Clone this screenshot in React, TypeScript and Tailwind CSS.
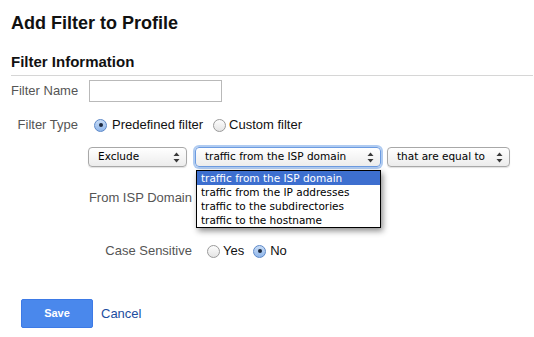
import React from "react";

function Arrows() {
  return (
    <svg width="7" height="11" viewBox="0 0 7 11" className="shrink-0">
      <path d="M3.5 0.5 L6.5 4 L0.5 4 Z" fill="#3a3a3a" />
      <path d="M3.5 10.5 L6.5 7 L0.5 7 Z" fill="#3a3a3a" />
    </svg>
  );
}

function Select({ label, width, focused }: { label: string; width: string; focused?: boolean }) {
  return (
    <div
      className={`${width} h-[20px] flex items-center justify-between pl-[9px] pr-[6px] rounded-[4px] border bg-gradient-to-b from-white to-[#ececec] text-[10.5px] text-black font-['DejaVu_Sans',sans-serif] ${
        focused
          ? "border-[#6c9be0] shadow-[0_0_0_2px_rgba(110,160,230,0.55)]"
          : "border-[#a8a8a8] shadow-[0_1px_1px_rgba(0,0,0,0.12)]"
      }`}
    >
      <span className="whitespace-nowrap">{label}</span>
      <Arrows />
    </div>
  );
}

function Radio({ checked }: { checked?: boolean }) {
  return (
    <span
      className={`ml-[5px] inline-flex h-[13px] w-[13px] shrink-0 items-center justify-center rounded-full border ${
        checked
          ? "border-[#5c88c8] bg-gradient-to-b from-[#c9dcf5] to-[#8fb6ea]"
          : "border-[#9a9a9a] bg-gradient-to-b from-[#fdfdfd] to-[#e4e4e4]"
      }`}
    >
      {checked && <span className="h-[4px] w-[4px] rounded-full bg-[#1c2a40]" />}
    </span>
  );
}

const options = [
  "traffic from the ISP domain",
  "traffic from the IP addresses",
  "traffic to the subdirectories",
  "traffic to the hostname",
];

export default function App() {
  return (
    <div className="min-h-[337px] w-[534px] bg-white pl-[11px] pr-[1px] font-['Liberation_Sans',Arial,sans-serif]">
      <h1 className="pt-[12px] text-[18px] leading-[22px] font-bold text-[#111]">Add Filter to Profile</h1>

      <h2 className="mt-[19px] pb-[4px] text-[15px] leading-[18px] font-bold text-[#111] border-b border-[#d6d6d6]">
        Filter Information
      </h2>

      {/* Filter name */}
      <div className="mt-[4px] flex items-center">
        <span className="w-[68px] shrink-0 whitespace-nowrap text-right pr-[1px] text-[13px] text-[#555]">Filter Name</span>
        <div className="ml-[10px] h-[22px] w-[133px] border border-[#b9b9b9] bg-white" />
      </div>

      {/* Filter type */}
      <div className="mt-[13px] flex h-[20px] items-center">
        <span className="w-[68px] shrink-0 whitespace-nowrap text-right pr-[1px] text-[13px] text-[#555]">Filter Type</span>
        <div className="ml-[10px] flex items-center whitespace-nowrap text-[13px] text-[#111]">
          <Radio checked />
          <span className="ml-[5px]">Predefined filter</span>
          <span className="ml-[5px] flex items-center">
            <Radio />
          </span>
          <span className="ml-[3px]">Custom filter</span>
        </div>
      </div>

      {/* Selects */}
      <div className="mt-[12px] ml-[77px] flex items-center">
        <Select label="Exclude" width="w-[99px]" />
        <div className="relative ml-[8px]">
          <Select label="traffic from the ISP domain" width="w-[186px]" focused />
          <ul className="absolute left-[1px] top-[23px] z-10 w-[185px] border border-black bg-white text-[10.5px] leading-[14px] text-black font-['DejaVu_Sans',sans-serif] shadow-[2px_3px_6px_rgba(0,0,0,0.45)]">
            {options.map((o, i) => (
              <li key={o} className={`pl-[4px] whitespace-nowrap ${i === 0 ? "bg-[#3d6fcf] text-white" : ""}`}>
                {o}
              </li>
            ))}
          </ul>
        </div>
        <div className="ml-[6px]">
          <Select label="that are equal to" width="w-[123px]" />
        </div>
      </div>

      {/* Nested fields */}
      <div className="ml-[77px]">
        <div className="mt-[20px] flex h-[22px] items-center">
          <span className="w-[104px] shrink-0 whitespace-nowrap text-right text-[13px] text-[#555]">From ISP Domain</span>
        </div>
        <div className="mt-[32px] flex h-[20px] items-center">
          <span className="w-[104px] shrink-0 whitespace-nowrap text-right text-[13px] text-[#555]">Case Sensitive</span>
          <div className="ml-[10px] flex items-center text-[13px] text-[#111]">
            <Radio />
            <span className="ml-[3px]">Yes</span>
            <span className="ml-[4px] flex items-center">
              <Radio checked />
            </span>
            <span className="ml-[4px]">No</span>
          </div>
        </div>
      </div>

      {/* Actions */}
      <div className="mt-[38px] ml-[10px] flex items-center">
        <button className="h-[29px] w-[72px] rounded-[2px] border border-[#3d7ae6] bg-[#4a88ec] text-[11px] font-bold text-white">
          Save
        </button>
        <a href="#" className="ml-[8px] text-[13px] text-[#1c4da0]">
          Cancel
        </a>
      </div>
    </div>
  );
}
